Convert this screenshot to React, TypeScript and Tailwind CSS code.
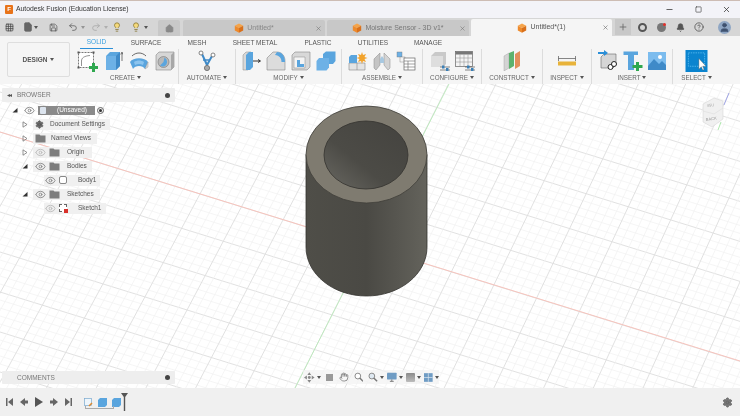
import React from 'react';
import {
  Grid3x3,
  File,
  Save,
  Undo2,
  Redo2,
  Lightbulb,
  Home,
  X,
  Plus,
  Bell,
  CircleHelp,
  Eye,
  Settings,
  Hand,
  Minus,
  Square,
  User,
} from 'lucide-react';

const Caret = ({ className = '' }: { className?: string }) => (
  <span className={`inline-block w-0 h-0 border-l-[2px] border-r-[2px] border-t-[3px] border-l-transparent border-r-transparent border-t-[#555] ${className}`} />
);

const Cube = () => (
  <svg width="10" height="10" viewBox="0 0 10 10" className="shrink-0">
    <path d="M5 0.5 9.2 2.7 5 5 0.8 2.7Z" fill="#f5a44a" />
    <path d="M0.8 2.7 5 5V9.7L0.8 7.4Z" fill="#ee8a2c" />
    <path d="M9.2 2.7 5 5V9.7L9.2 7.4Z" fill="#d9701a" />
  </svg>
);

const FolderIcon = () => (
  <svg width="11" height="9" viewBox="0 0 11 9" className="shrink-0">
    <path d="M0.5 0.5H4.5L5.5 1.5H10.5V8.5H0.5Z" fill="#7d7d7d" />
  </svg>
);

const Tri = ({ open }: { open: boolean }) =>
  open ? (
    <svg width="6" height="6" viewBox="0 0 6 6" className="shrink-0">
      <path d="M5.5 1V5.5H0.5Z" fill="#333" />
    </svg>
  ) : (
    <svg width="6" height="7" viewBox="0 0 6 7" className="shrink-0">
      <path d="M1 0.8 5 3.5 1 6.2Z" fill="none" stroke="#777" strokeWidth="0.8" />
    </svg>
  );

const EyeIcon = ({ dim }: { dim?: boolean }) => (
  <Eye size={11} strokeWidth={2} className={`shrink-0 ${dim ? 'text-[#bbb]' : 'text-[#888]'}`} />
);

// ribbon drawings
const SketchIcon = () => (
  <svg width="22" height="21" viewBox="0 0 22 21">
    <rect x="1.5" y="1.5" width="15" height="15" fill="#fff" stroke="#555" strokeWidth="0.8" strokeDasharray="2 1" />
    <rect x="0.5" y="0.5" width="2" height="2" fill="#555" />
    <rect x="15.500" y="0.5" width="2" height="2" fill="#555" />
    <rect x="0.5" y="15.500" width="2" height="2" fill="#555" />
    <path d="M4.500 15V10C4.500 7 7 5 13 4.500" fill="none" stroke="#777" strokeWidth="0.8" />
    <path d="M15 12H18V15H21V18H18V21H15V18H12V15H15Z" fill="#2fa84f" />
  </svg>
);
const ExtrudeIcon = () => (
  <svg width="18" height="20" viewBox="0 0 18 20">
    <path d="M1 5 5 1H15V15L11 19H1Z" fill="#5aa5de" />
    <path d="M1 5H11V19H1Z" fill="#6db1e6" />
    <path d="M11 5 15 1V15L11 19Z" fill="#3f8ac8" />
    <path d="M17 10V2M15.7 3.5 17 1 18 3.5" fill="none" stroke="#444" strokeWidth="0.7" />
  </svg>
);
const RevolveIcon = () => (
  <svg width="20" height="20" viewBox="0 0 20 20">
    <path d="M1 11C4 6 16 6 19 11L16 18C14 14 6 14 4 18Z" fill="#5aa5de" />
    <path d="M5 11C8 9 12 9 15 11L14 14C11 12.500 9 12.500 6 14Z" fill="#8cc4ee" />
    <path d="M16 18 19 11V16Z" fill="#ddd" stroke="#888" strokeWidth="0.4" />
    <path d="M3 5C7 1 13 1 17 5" fill="none" stroke="#444" strokeWidth="0.8" />
  </svg>
);
const HoleIcon = () => (
  <svg width="20" height="20" viewBox="0 0 20 20">
    <path d="M1 4 4 1H19V16L16 19H1Z" fill="#d6d6d6" stroke="#888" strokeWidth="0.6" />
    <path d="M16 4 19 1V16L16 19Z" fill="#a8a8a8" />
    <circle cx="8.500" cy="11" r="5.500" fill="#b8b8b8" stroke="#777" strokeWidth="0.6" />
    <path d="M8.500 11 9.500 6.500A5 5 0 0 1 9 15.500 5 5 0 0 1 5 14.500Z" fill="#5aa5de" />
  </svg>
);
const AutomateIcon = () => (
  <svg width="20" height="22" viewBox="0 0 20 22">
    <path d="M5 4 10 15M15 6 10 15" fill="none" stroke="#3f8ac8" strokeWidth="2" />
    <path d="M6 10H13" fill="none" stroke="#3f8ac8" strokeWidth="1.500" />
    <circle cx="4" cy="3" r="2" fill="#fff" stroke="#666" strokeWidth="0.8" />
    <circle cx="16" cy="5" r="2" fill="#fff" stroke="#666" strokeWidth="0.8" />
    <circle cx="10" cy="18" r="2.600" fill="#aaa" stroke="#666" strokeWidth="0.8" />
  </svg>
);
const PressPullIcon = () => (
  <svg width="19" height="20" viewBox="0 0 19 20">
    <path d="M1 4 4 1H9V16L6 19H1Z" fill="#d8d8d8" stroke="#888" strokeWidth="0.5" />
    <path d="M4 4 7 1H11V16L8 19H4Z" fill="#5aa5de" />
    <path d="M11 10H18M16 8.500 18.500 10 16 11.500" fill="none" stroke="#333" strokeWidth="1" />
  </svg>
);
const FilletIcon = () => (
  <svg width="20" height="20" viewBox="0 0 20 20">
    <path d="M1 19V7L7 1H11C16 1 19 5 19 10V19Z" fill="#dcdcdc" stroke="#888" strokeWidth="0.6" />
    <path d="M11 1C16 1 19 5 19 11H15.500C15.500 7 13.500 4.500 9 4Z" fill="#5aa5de" />
  </svg>
);
const ShellIcon = () => (
  <svg width="20" height="20" viewBox="0 0 20 20">
    <path d="M1 4 4 1H19V16L16 19H1Z" fill="#d8d8d8" stroke="#888" strokeWidth="0.6" />
    <path d="M3 6H14V17H3Z" fill="#f4f4f4" stroke="#888" strokeWidth="0.5" />
    <path d="M6 9H9V13H13V16H6Z" fill="#5aa5de" />
  </svg>
);
const CombineIcon = () => (
  <svg width="20" height="20" viewBox="0 0 20 20">
    <path d="M7 3 10 0.500H19.500V10L17 13H7Z" fill="#5aa5de" />
    <path d="M0.500 10 3 7H13V16.500L10.500 19.500H0.500Z" fill="#6db1e6" />
  </svg>
);
const NewComponentIcon = () => (
  <svg width="20" height="20" viewBox="0 0 20 20">
    <path d="M1 12H17V19H1Z" fill="#e4e4e4" stroke="#888" strokeWidth="0.6" />
    <path d="M9 12V19" stroke="#888" strokeWidth="0.6" />
    <path d="M1 6 3 4H9V12H1Z" fill="#5aa5de" />
    <path d="M14 1 15 4 18 3 16.500 6 19.500 7 16.500 8 18 11 15 10 14 13 13 10 10 11 11.500 8 8.500 7 11.500 6 10 3 13 4Z" fill="#f2a32c" />
  </svg>
);
const JointIcon = () => (
  <svg width="18" height="20" viewBox="0 0 18 20">
    <path d="M1 8 7 2V14L3 19 1 17Z" fill="#c4c4c4" stroke="#888" strokeWidth="0.5" />
    <path d="M11 2 17 8V17L15 19 11 14Z" fill="#d4d4d4" stroke="#888" strokeWidth="0.5" />
    <path d="M7 8 9 5 11 8V12H7Z" fill="#a8c8e0" />
  </svg>
);
const BomIcon = () => (
  <svg width="20" height="20" viewBox="0 0 20 20">
    <rect x="1" y="1" width="5" height="5" fill="#6db1e6" stroke="#777" strokeWidth="0.4" />
    <rect x="4" y="6" width="5" height="5" fill="#f4f4f4" stroke="#777" strokeWidth="0.4" />
    <rect x="8" y="7" width="11" height="12" fill="#fff" stroke="#666" strokeWidth="0.7" />
    <path d="M8 10H19M8 13H19M8 16H19M12 10V19" stroke="#666" strokeWidth="0.6" />
  </svg>
);
const ConfigCubeIcon = () => (
  <svg width="20" height="20" viewBox="0 0 20 20">
    <path d="M1 5 5 1H16V13L13 16H1Z" fill="#c9c9c9" />
    <path d="M1 5H13V16H1Z" fill="#dedede" />
    <path d="M10 16H20M10 19H20" stroke="#555" strokeWidth="0.7" />
    <rect x="12" y="14.500" width="2.500" height="3" fill="#3a7fb5" />
    <rect x="16" y="17" width="2.500" height="3" fill="#3a7fb5" />
  </svg>
);
const ConfigTableIcon = () => (
  <svg width="20" height="20" viewBox="0 0 20 20">
    <rect x="0.500" y="0.500" width="17" height="15" fill="#f4f4f4" stroke="#666" strokeWidth="0.7" />
    <rect x="0.500" y="0.500" width="17" height="3" fill="#777" />
    <path d="M0.500 7H17.500M0.500 11H17.500M5 3.500V15.500M9 3.500V15.500M13 3.500V15.500" stroke="#888" strokeWidth="0.5" />
    <path d="M10 16H20M10 19H20" stroke="#555" strokeWidth="0.7" />
    <rect x="12" y="14.500" width="2.500" height="3" fill="#3a7fb5" />
    <rect x="16" y="17" width="2.500" height="3" fill="#3a7fb5" />
  </svg>
);
const PlaneIcon = () => (
  <svg width="18" height="20" viewBox="0 0 18 20">
    <path d="M1 5 6 2V17L1 20Z" fill="#d4d4d4" stroke="#999" strokeWidth="0.4" />
    <path d="M6 2 11 0V15L6 18Z" fill="#5db26e" />
    <path d="M12 3 17 0V15L12 18Z" fill="#e28f5c" />
  </svg>
);
const MeasureIcon = () => (
  <svg width="18" height="10" viewBox="0 0 18 10">
    <path d="M0.500 0V5M17.500 0V5M0.500 2.500H17.500" fill="none" stroke="#555" strokeWidth="0.7" />
    <rect x="0" y="5.500" width="18" height="4" fill="#e8b33a" />
  </svg>
);
const InsertDeriveIcon = () => (
  <svg width="20" height="22" viewBox="0 0 20 22">
    <path d="M3 7 6 4H18V15L15 18H3Z" fill="#d6d6d6" stroke="#666" strokeWidth="0.6" />
    <path d="M0 3H7" stroke="#2b8fd8" strokeWidth="2" />
    <path d="M6 0 10 3 6 6Z" fill="#2b8fd8" />
    <circle cx="12.500" cy="17" r="2.500" fill="#fff" stroke="#222" strokeWidth="1" />
    <circle cx="16" cy="14" r="2.500" fill="#fff" stroke="#222" strokeWidth="1" />
  </svg>
);
const InsertMcMasterIcon = () => (
  <svg width="20" height="20" viewBox="0 0 20 20">
    <path d="M0.500 0.500H15V4H11V19H5V4H0.500Z" fill="#5aa5de" />
    <path d="M13 11H16V14H19.500V17H16V20H13V17H9.500V14H13Z" fill="#2fa84f" />
  </svg>
);
const ImageIcon = () => (
  <svg width="18" height="18" viewBox="0 0 18 18">
    <rect width="18" height="18" fill="#7cbcee" />
    <circle cx="12" cy="5" r="2" fill="#fff" />
    <path d="M0 14 6 7 11 12 14 9 18 13V18H0Z" fill="#3f8ac8" />
  </svg>
);
const SelectIcon = () => (
  <svg width="23" height="22" viewBox="0 0 23 23">
    <rect width="23" height="23" fill="#0a84cf" />
    <rect x="3" y="3" width="17" height="14" fill="none" stroke="#63c3f5" strokeWidth="0.8" strokeDasharray="1.500 1" />
    <path d="M14 9V20L16.500 17.500 18 21 19.500 20.500 18 17H21.500Z" fill="#fff" stroke="#555" strokeWidth="0.4" />
  </svg>
);

const ribbonTabs = [
  { label: 'SOLID', w: 'w-[33px]', ml: 'ml-0', on: true },
  { label: 'SURFACE', w: 'w-[40px]', ml: 'ml-[13px]' },
  { label: 'MESH', w: 'w-[30px]', ml: 'ml-[16px]' },
  { label: 'SHEET METAL', w: 'w-[50px]', ml: 'ml-[18px]' },
  { label: 'PLASTIC', w: 'w-[36px]', ml: 'ml-[20px]' },
  { label: 'UTILITIES', w: 'w-[40px]', ml: 'ml-[17px]' },
  { label: 'MANAGE', w: 'w-[36px]', ml: 'ml-[17px]' },
];

const ribbonGroups = [
  { label: 'CREATE', w: 'w-[98px] pr-[7px]', gap: 'gap-[6px]', icons: [<SketchIcon key="a" />, <ExtrudeIcon key="b" />, <RevolveIcon key="c" />, <HoleIcon key="d" />] },
  { label: 'AUTOMATE', w: 'w-[57px]', gap: 'gap-0', icons: [<AutomateIcon key="a" />] },
  { label: 'MODIFY', w: 'w-[106px]', gap: 'gap-[5px]', icons: [<PressPullIcon key="a" />, <FilletIcon key="b" />, <ShellIcon key="c" />, <CombineIcon key="d" />] },
  { label: 'ASSEMBLE', w: 'w-[81px]', gap: 'gap-[5px]', icons: [<NewComponentIcon key="a" />, <JointIcon key="b" />, <BomIcon key="c" />] },
  { label: 'CONFIGURE', w: 'w-[59px]', gap: 'gap-[5px]', icons: [<ConfigCubeIcon key="a" />, <ConfigTableIcon key="b" />] },
  { label: 'CONSTRUCT', w: 'w-[61px]', gap: 'gap-0', icons: [<PlaneIcon key="a" />] },
  { label: 'INSPECT', w: 'w-[49px]', gap: 'gap-0', icons: [<MeasureIcon key="a" />] },
  { label: 'INSERT', w: 'w-[81px]', gap: 'gap-[5px]', icons: [<InsertDeriveIcon key="a" />, <InsertMcMasterIcon key="b" />, <ImageIcon key="c" />] },
  { label: 'SELECT', w: 'w-[48px]', gap: 'gap-0', icons: [<SelectIcon key="a" />] },
];

const range = (from: number, to: number) => Array.from({ length: to - from + 1 }, (_, i) => from + i);

// viewport grid: 8px / 9.8px minor steps, every fifth line is a major one, both counted from the axes
const GridLines = () => (
  <svg width="740" height="304" viewBox="0 84 740 304" className="absolute inset-0">
    {range(-36, 34).map((k) => {
      const major = k % 5 === 0;
      const y0 = 132 + k * 8;
      return <line key={k} x1="0" y1={y0} x2="740" y2={y0 + 0.31 * 740} stroke={major ? '#dedede' : '#f1f1f1'} strokeWidth={major ? 0.9 : 0.7} />;
    })}
    {range(-46, 46).map((k) => {
      const major = k % 5 === 0;
      const x0 = 343 + k * 9.8;
      const s = 0.505 - k * 0.0015;
      return <line key={k} x1={x0 + s * 209} y1="84" x2={x0 - s * 95} y2="388" stroke={major ? '#dedede' : '#f1f1f1'} strokeWidth={major ? 0.9 : 0.7} />;
    })}
    <line x1="0" y1="132" x2="740" y2="361" stroke="#f8c0b8" strokeWidth="0.9" />
    <line x1="449" y1="84" x2="295" y2="388" stroke="#b5ebb5" strokeWidth="0.8" />
  </svg>
);

const CylinderModel = () => (
  <svg width="740" height="304" viewBox="0 84 740 304" className="absolute inset-0">
    <defs>
      <linearGradient id="wall" x1="0" x2="1" y1="0" y2="0">
        <stop offset="0" stopColor="#4f4e48" />
        <stop offset="0.5" stopColor="#4a4944" />
        <stop offset="1" stopColor="#64635c" />
      </linearGradient>
      <linearGradient id="bore" x1="0" x2="1" y1="1" y2="0">
        <stop offset="0" stopColor="#6a6963" />
        <stop offset="0.4" stopColor="#4c4b46" />
        <stop offset="1" stopColor="#44433f" />
      </linearGradient>
    </defs>
    <path d="M306 154.500V247C306 274 333 296 366.500 296S427 274 427 247V154.500Z" fill="url(#wall)" stroke="#33322e" strokeWidth="0.8" />
    <ellipse cx="366.500" cy="154.500" rx="60.500" ry="48.500" fill="#7f7b70" stroke="#3f3e39" strokeWidth="0.8" />
    <ellipse cx="366" cy="155" rx="42" ry="34" fill="url(#bore)" stroke="#33322e" strokeWidth="0.8" />
  </svg>
);

const ViewCube = () => (
  <svg width="36" height="44" viewBox="0 0 36 44" className="absolute left-[700px] top-[8px]">
    <path d="M29 1 24 13" stroke="#8f95e6" strokeWidth="0.8" />
    <path d="M18 38 21 30" stroke="#9be29b" strokeWidth="0.8" />
    <path d="M3 12 14 6 23 9 23 27 12 35 3 30Z" fill="#f0f0f0" stroke="#d0d0d0" strokeWidth="0.5" />
    <path d="M3 19 14 22 23 16" fill="none" stroke="#d8d8d8" strokeWidth="0.5" />
    <text x="7" y="15" fontSize="4" fill="#aaa" transform="rotate(-8 7 15)">45U</text>
    <text x="6" y="29" fontSize="4" fill="#999" transform="rotate(-8 6 29)">BACK</text>
  </svg>
);

const treeRows = [
  { kind: 'doc', pill: 'w-[77px]', text: 'Document Settings', tri: false },
  { kind: 'named', pill: 'w-[64px]', text: 'Named Views', tri: false },
  { kind: 'origin', pill: 'w-[59px]', text: 'Origin', tri: false, dim: true },
  { kind: 'bodies', pill: 'w-[59px]', text: 'Bodies', tri: true },
];

export default function App() {
  return (
    <div className="w-[740px] h-[416px] flex flex-col overflow-hidden bg-white blur-[0.3px] font-['Liberation_Sans',sans-serif] text-[#555]">
      {/* title bar */}
      <div className="h-[18px] shrink-0 flex items-center bg-[#f3f3f8] border-t border-[#cdbcb4] pl-[5px]">
        <div className="w-[8px] h-[9px] rounded-[1px] bg-[#e8731a] mr-[3px] flex items-center justify-center text-[6px] font-bold text-white">F</div>
        <span className="text-[6.8px] text-[#333]">Autodesk Fusion (Education License)</span>
        <div className="ml-auto flex items-center">
          <Minus size={9} className="text-[#333] mr-[21px]" />
          <Square size={7} className="text-[#333] mr-[20px]" />
          <X size={9} className="text-[#333] mr-[9px]" />
        </div>
      </div>

      {/* tab bar */}
      <div className="h-[18px] shrink-0 flex items-end bg-[#d6d6d6] text-[#666]">
        <div className="w-[158px] h-full flex items-center">
          <Grid3x3 size={9} className="ml-[5px] text-[#444]" />
          <File size={10} fill="#666" className="ml-[9px] text-[#666]" />
          <Caret className="ml-[1px]" />
          <Save size={9} className="ml-[11px] text-[#555]" />
          <Undo2 size={10} className="ml-[10px] text-[#666]" />
          <Caret className="ml-[3px] opacity-50" />
          <Redo2 size={10} className="ml-[6px] text-[#aaa]" />
          <Caret className="ml-[3px] opacity-30" />
          <Lightbulb size={10} fill="#f5d97a" className="ml-[4px] text-[#8a7a3a]" />
          <Lightbulb size={10} fill="#f5d97a" className="ml-[9px] text-[#8a7a3a]" />
          <Caret className="ml-[3px]" />
        </div>
        <div className="w-[22px] h-[16px] bg-[#c8c8c8] flex items-center justify-center rounded-t-[2px]">
          <Home size={9} fill="#888" className="text-[#888]" />
        </div>
        <div className="w-[142px] h-[16px] ml-[3px] bg-[#c8c8c8] flex items-center justify-center relative rounded-t-[2px]">
          <Cube />
          <span className="text-[7px] text-[#888] ml-[3px]">Untitled*</span>
          <X size={7} className="absolute right-[3px] text-[#777]" />
        </div>
        <div className="w-[142px] h-[16px] ml-[2px] bg-[#c8c8c8] flex items-center justify-center relative rounded-t-[2px]">
          <Cube />
          <span className="text-[7px] text-[#777] ml-[3px]">Moisture Sensor - 3D v1*</span>
          <X size={7} className="absolute right-[3px] text-[#777]" />
        </div>
        <div className="w-[141px] h-[17px] ml-[2px] bg-[#f5f5f5] flex items-center justify-center relative rounded-t-[2px]">
          <Cube />
          <span className="text-[7px] text-[#555] ml-[3px]">Untitled*(1)</span>
          <X size={7} className="absolute right-[3px] text-[#666]" />
        </div>
        <div className="w-[16px] h-[16px] ml-[3px] mb-[1px] bg-[#c8c8c8] flex items-center justify-center">
          <Plus size={10} className="text-[#666]" />
        </div>
        <div className="flex-1 h-full flex items-center">
          <div className="ml-[7px] w-[9px] h-[9px] rounded-full border-2 border-[#555]" />
          <div className="ml-[10px] w-[9px] h-[9px] rounded-full bg-[#777] relative">
            <div className="absolute right-0 top-0 w-[3px] h-[3px] rounded-full bg-[#e0302a]" />
          </div>
          <Bell size={9} fill="#555" className="ml-[10px] text-[#555]" />
          <CircleHelp size={10} className="ml-[9px] text-[#555]" />
          <div className="ml-[14px] w-[13px] h-[13px] rounded-full bg-[#8fa6c4] flex items-center justify-center overflow-hidden">
            <User size={11} fill="#3f5270" className="text-[#3f5270]" />
          </div>
        </div>
      </div>

      {/* ribbon */}
      <div className="h-[48px] shrink-0 flex bg-[#f5f5f5]">
        <div className="ml-[7px] mt-[6px] w-[63px] h-[35px] shrink-0 flex items-center justify-center gap-[3px] border border-[#dedede] rounded-[2px] bg-[#f5f5f5]">
          <span className="text-[6.5px] font-bold text-[#555]">DESIGN</span>
          <Caret />
        </div>
        <div className="ml-[10px] flex-1 flex flex-col min-w-0">
          <div className="h-[13px] shrink-0 flex items-center">
            {ribbonTabs.map((t) => (
              <div key={t.label} className={`${t.w} ${t.ml} h-[13px] flex items-center justify-center whitespace-nowrap text-[6.5px] ${t.on ? 'text-[#3aa0e0] border-b border-[#2b8fd8]' : 'text-[#555]'}`}>
                {t.label}
              </div>
            ))}
          </div>
          <div className="flex-1 flex">
            {ribbonGroups.map((g, i) => (
              <div key={g.label} className={`${g.w} shrink-0 flex flex-col items-center ${i > 0 ? 'border-l border-[#dcdcdc]' : ''}`}>
                <div className={`h-[22px] mt-[1px] w-max shrink-0 flex items-center ${g.gap}`}>{g.icons}</div>
                <div className="flex items-center gap-[2px] text-[6.3px] leading-[7px] text-[#666] whitespace-nowrap mt-[2px]">
                  {g.label}
                  <Caret />
                </div>
              </div>
            ))}
          </div>
        </div>
      </div>

      {/* canvas */}
      <div className="relative flex-1 bg-white overflow-hidden">
        <GridLines />
        <CylinderModel />
        <ViewCube />

        {/* browser panel */}
        <div className="absolute left-[2px] top-[4px] w-[173px]">
          <div className="h-[14px] flex items-center bg-[#eeeeee] rounded-[1px] px-[5px]">
            <span className="text-[6px] text-[#555] tracking-[-1px]">◂◂</span>
            <span className="ml-[6px] text-[6.5px] text-[#777]">BROWSER</span>
            <div className="ml-auto w-[5px] h-[5px] rounded-full bg-[#444]" />
          </div>
          <div className="mt-[1px] flex flex-col text-[6.5px] text-[#555]">
            <div className="h-[14px] flex items-center">
              <div className="ml-[10px]"><Tri open /></div>
              <div className="ml-[6px]"><EyeIcon /></div>
              <div className="ml-[3px] w-[57px] h-[9px] bg-[#8a8a8a] flex items-center pl-[2px] text-white">
                <div className="w-[6px] h-[7px] bg-[#dce4ee] rounded-[1px]" />
                <span className="ml-[11px]">(Unsaved)</span>
              </div>
              <div className="ml-[2px] w-[7px] h-[7px] rounded-full border border-[#666] bg-[#eee] flex items-center justify-center">
                <div className="w-[3px] h-[3px] rounded-full bg-[#333]" />
              </div>
            </div>
            {treeRows.map((r) => (
              <div key={r.kind} className="h-[14px] flex items-center">
                <div className="ml-[20px] w-[8px]"><Tri open={r.tri} /></div>
                <div className={`ml-[3px] ${r.pill} h-[11px] flex items-center bg-[#f0f0f0]`}>
                  {r.kind === 'doc' && <Settings size={9} fill="#666" className="ml-[2px] text-[#555]" />}
                  {r.kind === 'named' && <div className="ml-[2px]"><FolderIcon /></div>}
                  {(r.kind === 'origin' || r.kind === 'bodies') && (
                    <>
                      <div className="ml-[2px]"><EyeIcon dim={r.dim} /></div>
                      <div className="ml-[3px]"><FolderIcon /></div>
                    </>
                  )}
                  <span className={r.kind === 'doc' ? 'ml-[6px] whitespace-nowrap' : r.kind === 'named' ? 'ml-[5px] whitespace-nowrap' : 'ml-[7px] whitespace-nowrap'}>{r.text}</span>
                </div>
              </div>
            ))}
            <div className="h-[14px] flex items-center">
              <div className="ml-[42px] w-[56px] h-[11px] flex items-center bg-[#f0f0f0]">
                <div className="ml-[1px]"><EyeIcon /></div>
                <div className="ml-[3px] w-[8px] h-[8px] border border-[#888] rounded-[2px] bg-white" />
                <span className="ml-[11px]">Body1</span>
              </div>
            </div>
            <div className="h-[14px] flex items-center">
              <div className="ml-[20px] w-[8px]"><Tri open /></div>
              <div className="ml-[3px] w-[67px] h-[11px] flex items-center bg-[#f0f0f0]">
                <div className="ml-[2px]"><EyeIcon /></div>
                <div className="ml-[3px]"><FolderIcon /></div>
                <span className="ml-[7px]">Sketches</span>
              </div>
            </div>
            <div className="h-[14px] flex items-center">
              <div className="ml-[42px] w-[62px] h-[11px] flex items-center bg-[#f0f0f0]">
                <div className="ml-[1px]"><EyeIcon dim /></div>
                <div className="ml-[3px] relative w-[8px] h-[8px] border border-[#666] bg-white border-dashed">
                  <div className="absolute right-[-2px] bottom-[-2px] w-[4px] h-[4px] bg-[#d9302a]" />
                </div>
                <span className="ml-[11px]">Sketch1</span>
              </div>
            </div>
          </div>
        </div>

        {/* comments panel */}
        <div className="absolute left-[2px] top-[287px] w-[173px] h-[13px] flex items-center bg-[#eeeeee] rounded-[1px] pl-[15px] pr-[5px]">
          <span className="text-[6.5px] text-[#777]">COMMENTS</span>
          <div className="ml-auto w-[5px] h-[5px] rounded-full bg-[#444]" />
        </div>

        {/* navigation bar */}
        <div className="absolute left-[303px] top-[286px] h-[14px] w-[136px] flex items-center bg-[#f2f2f2]/70 text-[#777]">
          <svg width="11" height="11" viewBox="0 0 11 11" className="ml-[1px]"><path d="M5.500 0 7.500 3H3.500ZM5.500 11 3.500 8H7.500ZM0 5.500 3 3.500V7.500ZM11 5.500 8 7.500V3.500Z" fill="#888" /><circle cx="5.500" cy="5.500" r="1.500" fill="#888" /></svg>
          <Caret className="ml-[2px]" />
          <div className="ml-[5px] w-[8px] h-[7px] bg-[#999]" />
          <Hand size={10} className="ml-[6px]" />
          <svg width="10" height="10" viewBox="0 0 10 10" className="ml-[5px]"><circle cx="4" cy="4" r="3" fill="#fff" stroke="#888" /><path d="M6 6 9.500 9.500" stroke="#777" strokeWidth="1.500" /></svg>
          <svg width="10" height="10" viewBox="0 0 10 10" className="ml-[5px]"><circle cx="4" cy="4" r="3" fill="#dfe9f2" stroke="#888" /><path d="M6 6 9.500 9.500" stroke="#777" strokeWidth="1.500" /></svg>
          <Caret className="ml-[2px]" />
          <svg width="10" height="10" viewBox="0 0 10 10" className="ml-[3px]"><rect y="0.500" width="10" height="7" rx="0.500" fill="#6f9cc4" /><path d="M3 9.500H7M5 7.500V9.500" stroke="#777" /></svg>
          <Caret className="ml-[2px]" />
          <div className="ml-[3px] w-[10px] h-[9px] bg-gradient-to-b from-[#8a8a8a] to-[#bdbdbd] rounded-[1px]" />
          <Caret className="ml-[2px]" />
          <svg width="9" height="9" viewBox="0 0 9 9" className="ml-[3px]"><rect width="9" height="9" fill="#6f9cc4" /><path d="M4.500 0V9M0 4.500H9" stroke="#dfe9f2" strokeWidth="0.7" /></svg>
          <Caret className="ml-[2px]" />
        </div>
      </div>

      {/* timeline */}
      <div className="h-[28px] shrink-0 flex items-center bg-[#f0f0f0]">
        <div className="ml-[6px] flex items-center gap-[7px] text-[#666]">
          <svg width="7" height="8" viewBox="0 0 7 8"><path d="M0 0H1.500V8H0ZM7 0V8L2 4Z" fill="#666" /></svg>
          <svg width="8" height="8" viewBox="0 0 8 8"><path d="M5 0V8L0 4ZM5 2.500H8V5.500H5Z" fill="#666" /></svg>
          <svg width="8" height="10" viewBox="0 0 8 10"><path d="M0 0 8 5 0 10Z" fill="#555" /></svg>
          <svg width="8" height="8" viewBox="0 0 8 8"><path d="M3 0V8L8 4ZM0 2.500H3V5.500H0Z" fill="#666" /></svg>
          <svg width="7" height="8" viewBox="0 0 7 8"><path d="M5.500 0H7V8H5.500ZM0 0V8L5 4Z" fill="#666" /></svg>
        </div>
        <div className="ml-[12px] relative flex items-center gap-[5px]">
          <svg width="9" height="9" viewBox="0 0 9 9"><rect x="0.500" y="0.500" width="7" height="7" fill="#eef5fb" stroke="#7aa8cf" strokeWidth="0.7" /><path d="M5 8 8 5" stroke="#e08a2c" strokeWidth="1.500" /></svg>
          <svg width="9" height="9" viewBox="0 0 9 9"><path d="M0 2 2 0H9V7L7 9H0Z" fill="#5aa5de" /></svg>
          <svg width="9" height="9" viewBox="0 0 9 9"><path d="M0 2 2 0H9V7L7 9H0Z" fill="#5aa5de" /></svg>
          <div className="absolute left-[1px] top-[13px] w-[29px] h-[3px] border-b border-l border-r border-[#aaa]" />
          <svg width="7" height="18" viewBox="0 0 7 18" className="ml-[-5px]"><path d="M0 0H7L4.200 4V18H2.800V4Z" fill="#555" /></svg>
        </div>
        <Settings size={11} fill="#777" className="ml-auto mr-[7px] text-[#666]" />
      </div>
    </div>
  );
}
